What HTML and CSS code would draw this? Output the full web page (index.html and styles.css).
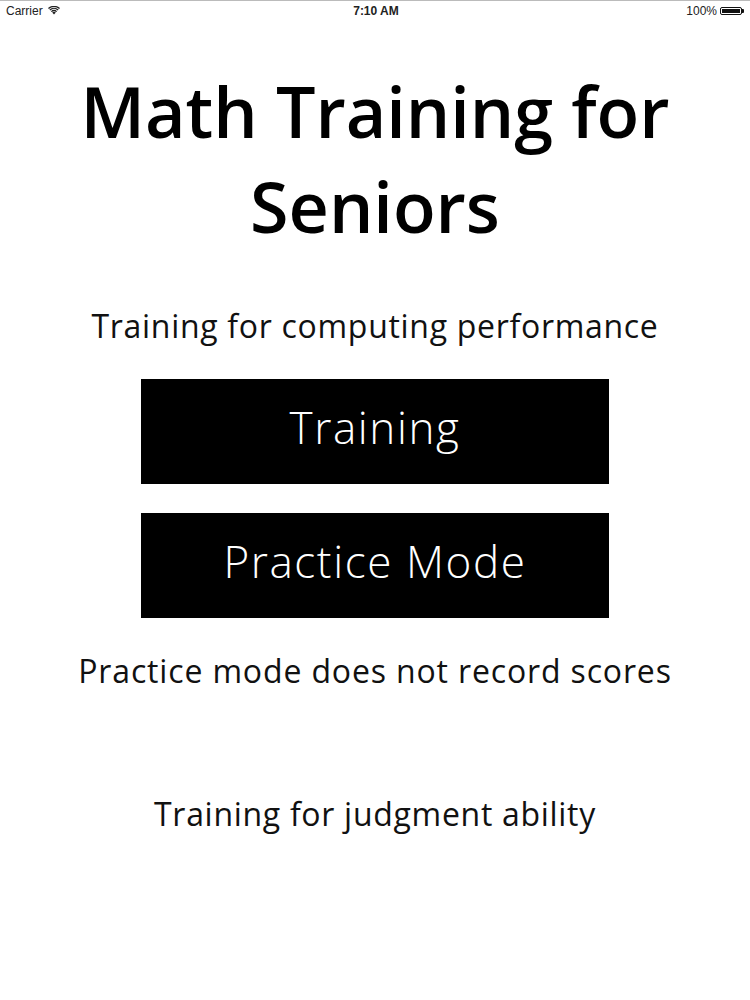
FILE: index.html
```html
<!DOCTYPE html>
<html>
<head>
<meta charset="utf-8">
<link rel="stylesheet" href="styles.css">
</head>
<body>
<div class="status">
  <div class="st-left">Carrier
    <svg class="wifi" width="12" height="9" viewBox="0 0 12 9">
      <path d="M6 8.6 L4.2 6.6 A2.6 2.6 0 0 1 7.8 6.6 Z" fill="#222"/>
      <path d="M2.9 5.2 A4.6 4.6 0 0 1 9.1 5.2 L8.2 6.1 A3.4 3.4 0 0 0 3.8 6.1 Z" fill="#222"/>
      <path d="M1.4 3.6 A6.8 6.8 0 0 1 10.6 3.6 L9.7 4.5 A5.6 5.6 0 0 0 2.3 4.5 Z" fill="#222"/>
      <path d="M0 2.1 A8.8 8.8 0 0 1 12 2.1 L11.1 3 A7.6 7.6 0 0 0 0.9 3 Z" fill="#222"/>
    </svg>
  </div>
  <div class="st-center">7:10 AM</div>
  <div class="st-right">100%
    <span class="battery"><span class="batt-fill"></span></span><span class="batt-tip"></span>
  </div>
</div>
<main class="main">
  <h1 class="title">Math Training for<br>Seniors</h1>
  <p class="sub sub-1">Training for computing performance</p>
  <div class="btn btn-1">Training</div>
  <div class="btn btn-2">Practice Mode</div>
  <p class="sub sub-2">Practice mode does not record scores</p>
  <p class="sub sub-3">Training for judgment ability</p>
</main>
</body>
</html>
```
FILE: styles.css
```css
html, body {
  margin: 0;
  padding: 0;
  background: #fff;
}
body {
  width: 750px;
  font-family: "Open Sans", "Liberation Sans", sans-serif;
  color: #000;
}
.status {
  height: 20px;
  border-top: 1px solid #bbb;
  box-sizing: border-box;
  display: grid;
  grid-template-columns: 1fr auto 1fr;
  align-items: center;
  font-family: "Liberation Sans", Arial, sans-serif;
  font-size: 12px;
  color: #222;
  padding: 0 6px;
}
.st-left {
  display: flex;
  align-items: center;
  gap: 5px;
}
.wifi { display: block; }
.st-center {
  font-weight: bold;
  text-align: center;
  padding-left: 2px;
}
.st-right {
  display: flex;
  justify-content: flex-end;
  align-items: center;
  gap: 3px;
}
.battery {
  display: inline-block;
  width: 22px;
  height: 8px;
  border: 1px solid #111;
  border-radius: 2px;
  box-sizing: border-box;
  padding: 1px;
}
.batt-fill {
  display: block;
  width: 100%;
  height: 100%;
  background: #111;
}
.batt-tip {
  display: inline-block;
  width: 2px;
  height: 4px;
  background: #111;
  margin-left: -3px;
  border-radius: 0 1px 1px 0;
}
.main {
  display: flex;
  flex-direction: column;
  align-items: center;
}
.title {
  margin: 44px 0 0;
  font-size: 70px;
  line-height: 95px;
  font-weight: 600;
  text-align: center;
  letter-spacing: 0;
}
.sub {
  margin: 0;
  font-size: 32px;
  line-height: 40px;
  font-weight: 400;
  color: #111;
  text-align: center;
  letter-spacing: 0.7px;
}
.sub-1 { margin-top: 52px; }
.sub-2 { letter-spacing: 0.85px; }
.btn {
  width: 468px;
  height: 105px;
  box-sizing: border-box;
  padding-bottom: 9px;
  background: #000;
  color: #fff;
  font-size: 44px;
  font-weight: 300;
  letter-spacing: 1.6px;
  display: flex;
  align-items: center;
  justify-content: center;
}
.btn-1 { margin-top: 33px; }
.btn-2 { margin-top: 29px; }
.sub-2 { margin-top: 33px; }
.sub-3 { margin-top: 103px; }
```
